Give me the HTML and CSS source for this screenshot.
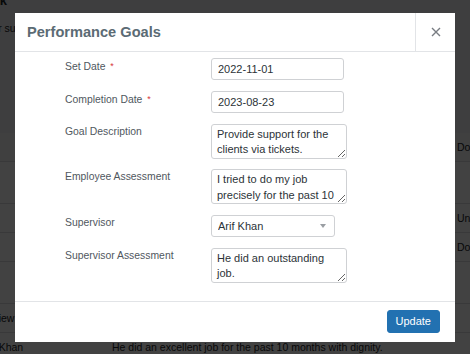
FILE: index.html
```html
<!DOCTYPE html>
<html lang="en">
<head>
    <meta charset="UTF-8">
    <meta name="viewport" content="width=device-width, initial-scale=1.0">
    <title>Performance Goals</title>
    <link rel="stylesheet" href="styles.css">
</head>
<body>
    <div class="page">
        <h1 class="page-title">Feedback</h1>
        <p class="page-note">Ask for support</p>
        <p class="page-link"><a href="#">Add</a></p>

        <table class="goals-table">
            <thead>
                <tr><th></th><th>Assessment</th><th>Done</th></tr>
            </thead>
            <tbody>
                <tr class="tall"><td></td><td></td><td></td></tr>
                <tr><td></td><td></td><td>Unmet</td></tr>
                <tr><td></td><td></td><td>Done</td></tr>
                <tr class="tall"><td></td><td></td><td></td></tr>
                <tr><td>Review</td><td></td><td></td></tr>
                <tr><td>Arif Khan</td><td>He did an excellent job for the past 10 months with dignity.</td><td></td></tr>
            </tbody>
        </table>
    </div>

    <div class="overlay"></div>

    <div class="modal">
        <div class="modal-header">
            <h2>Performance Goals</h2>
            <button class="close-btn" aria-label="Close">
                <svg width="10" height="10" viewBox="0 0 10 10">
                    <path d="M1 1 L9 9 M9 1 L1 9" stroke="#787c82" stroke-width="1.4" fill="none"/>
                </svg>
            </button>
        </div>

        <form class="modal-body">
            <label class="field-label">Set Date <span class="req">*</span></label>
            <input class="field" type="text" value="2022-11-01">

            <label class="field-label">Completion Date <span class="req">*</span></label>
            <input class="field" type="text" value="2023-08-23">

            <label class="field-label">Goal Description</label>
            <textarea class="field area">Provide support for the clients via tickets.</textarea>

            <label class="field-label">Employee Assessment</label>
            <textarea class="field area">I tried to do my job precisely for the past 10 months and helped the team.</textarea>

            <label class="field-label">Supervisor</label>
            <div class="select-wrap">
                <select class="field select">
                    <option>Arif Khan</option>
                </select>
            </div>

            <label class="field-label">Supervisor Assessment</label>
            <textarea class="field area">He did an outstanding job.</textarea>
        </form>

        <div class="modal-footer">
            <button class="update-btn" type="button">Update</button>
        </div>
    </div>
</body>
</html>
```

FILE: styles.css
```css
body {
    margin: 0;
    padding: 0;
    background: #f0f0f1;
    color: #1d2327;
    font-family: "Liberation Sans", Arial, sans-serif;
    overflow: hidden;
}

/* page behind the modal */
.page {
    margin-left: -53px;
    font-size: 10.5px;
}
.page-title {
    font-size: 13px;
    line-height: 16px;
    margin: -7px 0 0 0;
}
.page-note {
    line-height: 16px;
    margin: 11px 0 0 0;
    padding-left: 22px;
}
.page-link {
    line-height: 16px;
    margin: 0;
}
.page-link a {
    color: #2271b1;
    text-decoration: none;
    margin-left: 34px;
}
.goals-table {
    margin-top: 81px;
    margin-left: 23px;
    border-collapse: collapse;
    table-layout: fixed;
    width: 600px;
    background: #fff;
}
.goals-table th,
.goals-table td {
    padding: 0 10px;
    text-align: left;
    height: 28px;
    border-bottom: 1px solid #dcdcde;
    white-space: nowrap;
}
.goals-table th {
    font-weight: normal;
    background: #f6f7f7;
}
.goals-table th:nth-child(1),
.goals-table td:nth-child(1) { width: 112px; }
.goals-table th:nth-child(2),
.goals-table td:nth-child(2) { width: 325px; }
.goals-table tr.tall td { height: 41px; }

.overlay {
    position: fixed;
    top: 0;
    left: 0;
    right: 0;
    bottom: 0;
    background: rgba(0, 0, 0, 0.74);
}

/* modal */
.modal {
    position: fixed;
    top: 13px;
    left: 15px;
    width: 440px;
    background: #fff;
}
.modal-header {
    display: flex;
    height: 38px;
    border-bottom: 1px solid #e2e4e7;
}
.modal-header h2 {
    flex: 1;
    margin: 0;
    padding-left: 12px;
    font-size: 14.6px;
    font-weight: 600;
    line-height: 38px;
    color: #5b6b74;
}
.close-btn {
    width: 40px;
    border: none;
    border-left: 1px solid #e2e4e7;
    background: none;
    padding: 0;
    display: flex;
    align-items: center;
    justify-content: center;
    cursor: pointer;
}

.modal-body {
    display: grid;
    grid-template-columns: 146px auto;
    justify-content: start;
    align-items: start;
    row-gap: 10.8px;
    padding: 6px 0 18px 50px;
}
.field-label {
    padding-top: 1px;
    font-size: 10.4px;
    line-height: 14px;
    color: #50575e;
}
.req {
    color: #d63638;
    font-size: 9px;
    vertical-align: 1px;
    margin-left: 2px;
}
.field {
    box-sizing: border-box;
    font-family: "Liberation Sans", Arial, sans-serif;
    font-size: 11px;
    color: #2c3338;
    border: 1px solid #cfd1d4;
    border-radius: 3px;
    background: #fff;
    margin: 0;
}
input.field {
    width: 133px;
    height: 22px;
    padding: 0 6px;
}
.area {
    width: 136px;
    height: 35px;
    padding: 2px 5px;
    line-height: 15.3px;
    overflow: hidden;
    resize: vertical;
}
.select-wrap {
    position: relative;
    width: 124px;
}
.select {
    width: 124px;
    height: 22px;
    padding: 0 6px;
    appearance: none;
    -webkit-appearance: none;
}
.select-wrap::after {
    content: "";
    position: absolute;
    right: 9px;
    top: 9px;
    border-left: 3px solid transparent;
    border-right: 3px solid transparent;
    border-top: 4px solid #9a9ea3;
}

.modal-footer {
    display: flex;
    justify-content: flex-end;
    padding: 8px 15px 9px;
    border-top: 1px solid #e2e4e7;
}
.update-btn {
    height: 23px;
    padding: 0 8px;
    background: #2271b1;
    border: 1px solid #2271b1;
    border-radius: 3px;
    color: #fff;
    font-family: "Liberation Sans", Arial, sans-serif;
    font-size: 11px;
    cursor: pointer;
}
```
